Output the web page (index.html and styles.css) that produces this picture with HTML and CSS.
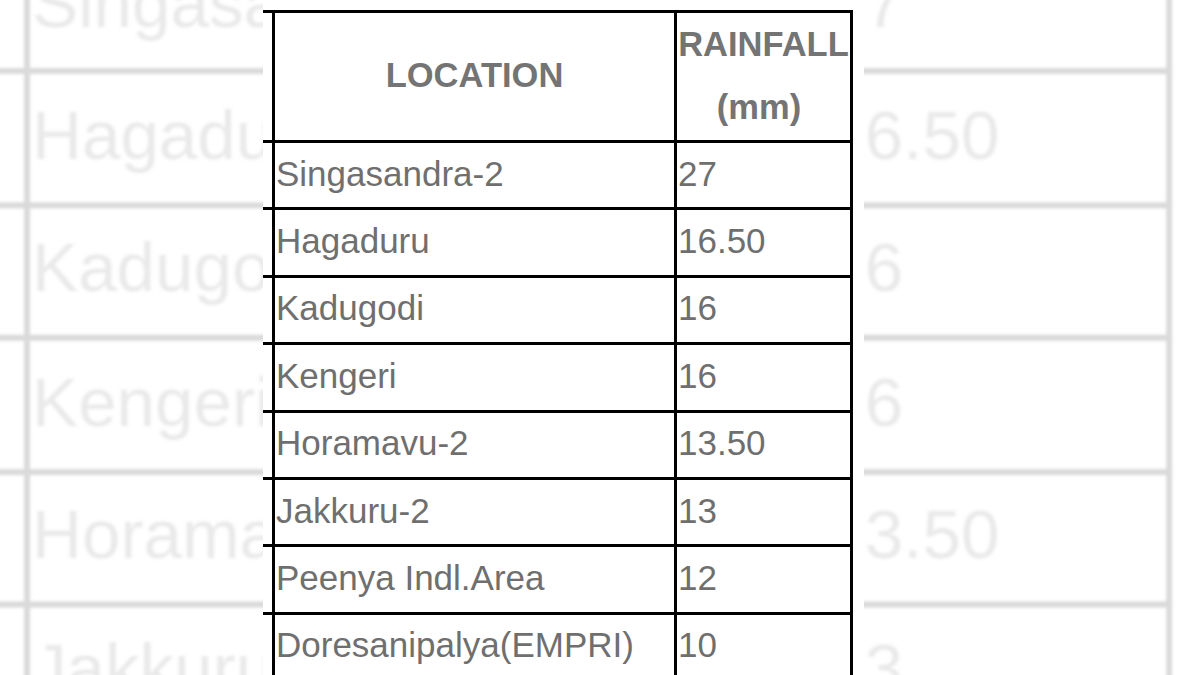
FILE: index.html
```html
<!DOCTYPE html>
<html lang="en">
<head>
<meta charset="utf-8">
<title>Rainfall (mm)</title>
<link rel="stylesheet" href="styles.css">
</head>
<body>
<main class="stage">
  <div class="backdrop" aria-hidden="true">
    <div class="sheet sheet--ghost">
      <div class="stub"></div><div class="head"><span class="head-text">LOCATION</span></div><div class="head"><span class="head-text">RAINFALL<br><span class="unit">(mm)</span></span></div>
      <div class="stub"></div><div class="cell">Singasandra-2</div><div class="cell">27</div>
      <div class="stub"></div><div class="cell">Hagaduru</div><div class="cell">16.50</div>
      <div class="stub"></div><div class="cell">Kadugodi</div><div class="cell">16</div>
      <div class="stub"></div><div class="cell">Kengeri</div><div class="cell">16</div>
      <div class="stub"></div><div class="cell">Horamavu-2</div><div class="cell">13.50</div>
      <div class="stub"></div><div class="cell">Jakkuru-2</div><div class="cell">13</div>
      <div class="stub"></div><div class="cell">Peenya Indl.Area</div><div class="cell">12</div>
      <div class="stub"></div><div class="cell">Doresanipalya(EMPRI)</div><div class="cell">10</div>
    </div>
  </div>
  <div class="frame">
    <div class="sheet">
      <div class="stub"></div><div class="head"><span class="head-text">LOCATION</span></div><div class="head"><span class="head-text">RAINFALL<br><span class="unit">(mm)</span></span></div>
      <div class="stub"></div><div class="cell">Singasandra-2</div><div class="cell">27</div>
      <div class="stub"></div><div class="cell">Hagaduru</div><div class="cell">16.50</div>
      <div class="stub"></div><div class="cell">Kadugodi</div><div class="cell">16</div>
      <div class="stub"></div><div class="cell">Kengeri</div><div class="cell">16</div>
      <div class="stub"></div><div class="cell">Horamavu-2</div><div class="cell">13.50</div>
      <div class="stub"></div><div class="cell">Jakkuru-2</div><div class="cell">13</div>
      <div class="stub"></div><div class="cell">Peenya Indl.Area</div><div class="cell">12</div>
      <div class="stub"></div><div class="cell">Doresanipalya(EMPRI)</div><div class="cell">10</div>
    </div>
  </div>
</main>
</body>
</html>
```

FILE: styles.css
```css
html, body {
  margin: 0;
  padding: 0;
  background: #ffffff;
}

body {
  font-family: "Liberation Sans", Arial, sans-serif;
  overflow: hidden;
}

.stage {
  display: grid;
  width: 1200px;
  height: 675px;
  overflow: hidden;
  background: #ffffff;
}

.backdrop,
.frame {
  grid-area: 1 / 1;
}

.backdrop {
  z-index: 0;
  padding: 10px 0 0 250px;
}

.frame {
  z-index: 1;
  margin-left: 263px;
  width: 601px;
  padding-top: 10px;
  background: #ffffff;
  overflow: hidden;
}

.sheet {
  display: grid;
  width: max-content;
  grid-template-columns: 22px 399px 173px;
  grid-template-rows: 127px;
  grid-auto-rows: 64.4px;
  gap: 3px;
  padding: 3px 3px 3px 0;
  background: #000000;
}

.frame .sheet {
  margin-left: -13px;
}

.sheet--ghost {
  transform: scale(1.976);
  transform-origin: 276px 339.4px;
  opacity: 0.14;
  filter: blur(0.8px);
}

.stub {
  background: #ffffff;
}

.cell {
  display: flex;
  align-items: center;
  padding: 0 1px 3px 1px;
  background: #ffffff;
  color: #6f6f6f;
  font-size: 35px;
  white-space: nowrap;
}

.head {
  display: flex;
  align-items: center;
  justify-content: center;
  background: #ffffff;
  color: #747474;
  font-size: 34.5px;
  font-weight: bold;
  line-height: 63px;
}

.head-text {
  display: block;
  margin-top: -2px;
  text-align: center;
  white-space: nowrap;
}

.unit {
  padding-right: 9px;
}
```
